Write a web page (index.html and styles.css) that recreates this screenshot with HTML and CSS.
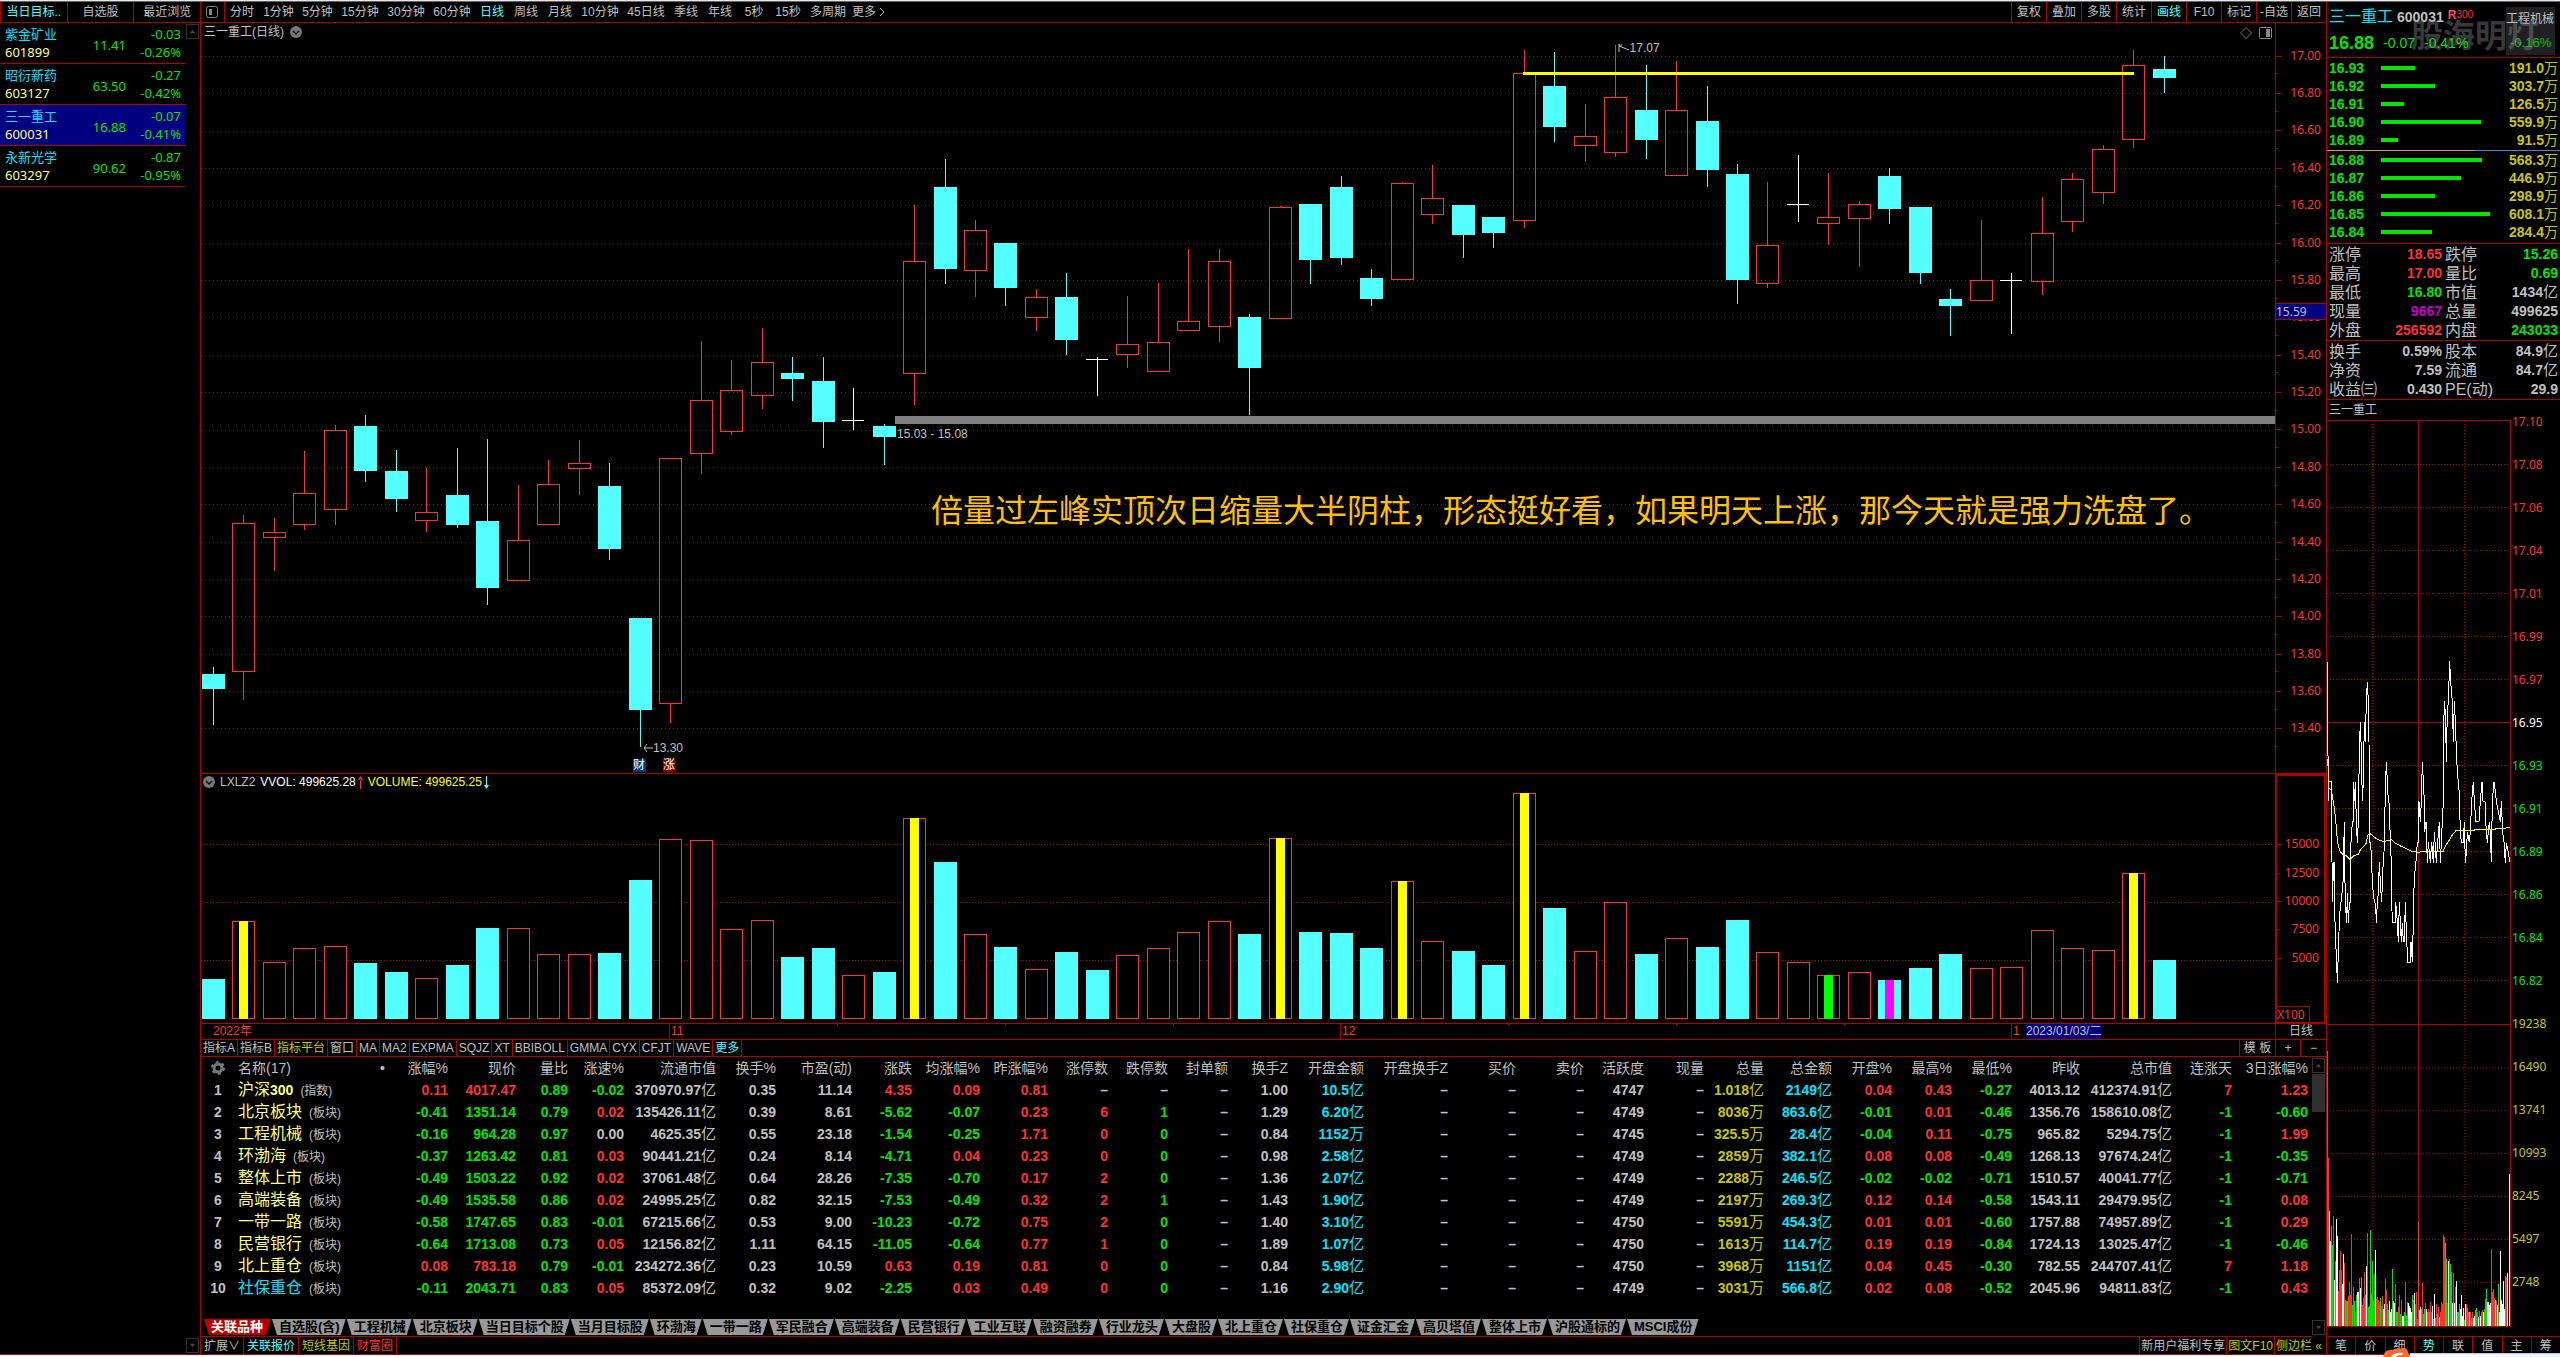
FILE: index.html
```html
<!DOCTYPE html>
<html lang="zh-CN">
<head>
<meta charset="utf-8">
<title>三一重工 600031 日线</title>
<link rel="stylesheet" href="styles.css">
</head>
<body>
<div class="window-edge"></div>
<div class="app">

  <aside class="watch">
    <nav class="watch-tabs">
      <button class="on">当日目标..</button><button>自选股</button><button>最近浏览</button>
    </nav>
    <div class="watch-body">
      <ul class="watch-list">
        <li><b>紫金矿业</b><span class="code">601899</span><span class="price">11.41</span><span class="chg">-0.03</span><span class="pct">-0.26%</span></li>
        <li><b>昭衍新药</b><span class="code">603127</span><span class="price">63.50</span><span class="chg">-0.27</span><span class="pct">-0.42%</span></li>
        <li class="sel"><b>三一重工</b><span class="code">600031</span><span class="price">16.88</span><span class="chg">-0.07</span><span class="pct">-0.41%</span></li>
        <li><b>永新光学</b><span class="code">603297</span><span class="price">90.62</span><span class="chg">-0.87</span><span class="pct">-0.95%</span></li>
      </ul>
      <div class="scroll">
        <button class="arrow" aria-label="上滚"><svg viewBox="0 0 12 12"><path d="M3 8h6L6 4z"/></svg></button>
        <button class="arrow" aria-label="下滚"><svg viewBox="0 0 12 12"><path d="M3 4h6L6 8z"/></svg></button>
      </div>
    </div>
  </aside>

  <main class="center">
    <header class="topbar">
      <button class="panel-toggle" aria-label="侧栏"><svg width="12" height="12" viewBox="0 0 12 12"><rect x=".5" y=".5" width="11" height="11" rx="2" fill="none" stroke="#888"/><path d="M3 3h3v6H3z" fill="#888"/></svg></button>
      <nav class="periods">
        <button>分时</button><button class="m">1分钟</button><button class="m">5分钟</button><button class="l">15分钟</button><button class="l">30分钟</button><button class="l">60分钟</button><button class="on">日线</button><button>周线</button><button>月线</button><button class="l">10分钟</button><button class="l">45日线</button><button>季线</button><button>年线</button><button>5秒</button><button>15秒</button><button class="l">多周期</button><button class="l more">更多<svg width="6" height="10" viewBox="0 0 6 10"><path d="M1 1l4 4-4 4" fill="none" stroke="#c0c0c0"/></svg></button>
      </nav>
      <nav class="tools">
        <button>复权</button><button>叠加</button><button>多股</button><button>统计</button><button class="on">画线</button><button>F10</button><button>标记</button><button>-自选</button><button>返回</button>
      </nav>
    </header>

    <section class="pane price-pane">
      <div class="plot">
        <svg id="candles" class="fill" viewBox="201 23 2074 750" preserveAspectRatio="none"></svg>
        <h1 class="plot-title">三一重工(日线)<svg width="12" height="12" viewBox="0 0 12 12"><circle cx="6" cy="6" r="6" fill="#777"/><path d="M3 5l3 3 3-3" fill="none" stroke="#111" stroke-width="1.5"/></svg></h1>
        <div class="plot-icons">
          <svg width="12" height="12" viewBox="0 0 12 12"><path d="M6 .5L11.500 6 6 11.500.5 6z" fill="none" stroke="#777"/></svg>
          <svg width="13" height="12" viewBox="0 0 13 12"><rect x=".5" y=".5" width="12" height="11" rx="1" fill="none" stroke="#888"/><path d="M7 2h4v8H7z" fill="#888"/></svg>
        </div>
        <span class="mark high"><svg width="12" height="10" viewBox="0 0 12 10"><path d="M1 9V1M1 2h3M1 3l10 4" fill="none" stroke="#c0c0c0"/></svg>17.07</span>
        <span class="mark low"><svg width="10" height="10" viewBox="0 0 10 10"><path d="M10 5H1M4 1L1 5l3 4" fill="none" stroke="#c0c0c0"/></svg>13.30</span>
        <span class="mark gap">15.03 - 15.08</span>
        <p class="note">倍量过左峰实顶次日缩量大半阴柱，形态挺好看，如果明天上涨，那今天就是强力洗盘了。</p>
        <span class="flag report">财</span><span class="flag rise">涨</span>
      </div>
      <div class="axis price-axis">
        <ol><li>17.00</li><li>16.80</li><li>16.60</li><li>16.40</li><li>16.20</li><li>16.00</li><li>15.80</li><li>15.60</li><li>15.40</li><li>15.20</li><li>15.00</li><li>14.80</li><li>14.60</li><li>14.40</li><li>14.20</li><li>14.00</li><li>13.80</li><li>13.60</li><li>13.40</li></ol>
        <span class="cursor-price">15.59</span>
      </div>
    </section>

    <section class="pane vol-pane">
      <div class="plot">
        <svg id="volumes" class="fill" viewBox="201 774 2074 249" preserveAspectRatio="none"></svg>
        <div class="vol-title"><svg width="12" height="12" viewBox="0 0 12 12"><circle cx="6" cy="6" r="6" fill="#777"/><path d="M3 5l3 3 3-3" fill="none" stroke="#111" stroke-width="1.500"/></svg><span>LXLZ2</span><span class="w">VVOL: 499625.28<svg width="5" height="13" viewBox="0 0 5 13"><path d="M2 3h1v10H2zM0 4h5L2.500 0z" fill="#ff3232"/></svg></span><span class="y">VOLUME: 499625.25<svg width="5" height="13" viewBox="0 0 5 13"><path d="M2 0h1v10H2zM0 9h5L2.500 13z" fill="#54ffff"/></svg></span></div>
      </div>
      <div class="axis vol-axis">
        <ol><li>15000</li><li>12500</li><li>10000</li><li>7500</li><li>5000</li></ol>
        <span class="unit">X100</span>
      </div>
    </section>

    <div class="dates">
      <div class="date-track">
        <span>2022年</span><span class="month">11</span><span class="month">12</span><span class="month">1</span>
        <span class="cursor-date">2023/01/03/二</span>
      </div>
      <span class="date-unit">日线</span>
    </div>

    <nav class="indicators">
      <button>指标A</button><button>指标B</button><button class="y">指标平台</button><button>窗口</button><button>MA</button><button>MA2</button><button>EXPMA</button><button>SQJZ</button><button>XT</button><button>BBIBOLL</button><button>GMMA</button><button>CYX</button><button>CFJT</button><button>WAVE</button><button class="on">更多</button>
      <div class="templates"><button>模 板</button><button>+</button><button>−</button></div>
    </nav>

    <section class="quotes">
      <div class="quotes-view">
        <table id="quotes"></table>
      </div>
      <div class="scroll">
        <button class="arrow" aria-label="上滚"><svg viewBox="0 0 12 12"><path d="M3 8h6L6 4z"/></svg></button>
        <div class="thumb"></div>
        <button class="arrow" aria-label="下滚"><svg viewBox="0 0 12 12"><path d="M3 4h6L6 8z"/></svg></button>
      </div>
    </section>

    <nav class="boards">
      <button class="on">关联品种</button><button>自选股(含)</button><button>工程机械</button><button>北京板块</button><button>当日目标个股</button><button>当月目标股</button><button>环渤海</button><button>一带一路</button><button>军民融合</button><button>高端装备</button><button>民营银行</button><button>工业互联</button><button>融资融券</button><button>行业龙头</button><button>大盘股</button><button>北上重仓</button><button>社保重仓</button><button>证金汇金</button><button>高贝塔值</button><button>整体上市</button><button>沪股通标的</button><button>MSCI成份</button>
    </nav>

    <footer class="statusbar">
      <button>扩展∨</button><button class="on">关联报价</button><button class="y">短线基因</button><button class="r">财富圈</button>
      <div class="status-right"><button>新用户福利专享</button><button class="y">图文F10</button><button class="y">侧边栏 «</button></div>
    </footer>
  </main>

  <aside class="detail">
    <header class="stock">
      <div class="stock-id"><h2>三一重工</h2><b>600031</b><i>R</i><small>300</small></div>
      <div class="stock-price"><strong>16.88</strong><span>-0.07</span><span>-0.41%</span></div>
      <div class="sector"><span>工程机械</span><em>-0.16%</em></div>
      <div class="watermark">股海明灯</div>
    </header>
    <ul class="book asks">
      <li><b>16.93</b><i style="width:34px"></i><span>191.0<u>万</u></span></li>
      <li><b>16.92</b><i style="width:54px"></i><span>303.7<u>万</u></span></li>
      <li><b>16.91</b><i style="width:23px"></i><span>126.5<u>万</u></span></li>
      <li><b>16.90</b><i style="width:100px"></i><span>559.9<u>万</u></span></li>
      <li><b>16.89</b><i style="width:17px"></i><span>91.5<u>万</u></span></li>
    </ul>
    <div class="ratio"><i></i></div>
    <ul class="book bids">
      <li><b>16.88</b><i style="width:101px"></i><span>568.3<u>万</u></span></li>
      <li><b>16.87</b><i style="width:80px"></i><span>446.9<u>万</u></span></li>
      <li><b>16.86</b><i style="width:54px"></i><span>298.9<u>万</u></span></li>
      <li><b>16.85</b><i style="width:109px"></i><span>608.1<u>万</u></span></li>
      <li><b>16.84</b><i style="width:51px"></i><span>284.4<u>万</u></span></li>
    </ul>
    <dl class="stats">
      <dt>涨停</dt><dd class="r">18.65</dd><dt>跌停</dt><dd class="g">15.26</dd>
      <dt>最高</dt><dd class="r">17.00</dd><dt>量比</dt><dd class="g">0.69</dd>
      <dt>最低</dt><dd class="g">16.80</dd><dt>市值</dt><dd>1434<u>亿</u></dd>
      <dt>现量</dt><dd class="m">9667</dd><dt>总量</dt><dd>499625</dd>
      <dt>外盘</dt><dd class="r">256592</dd><dt>内盘</dt><dd class="g">243033</dd>
    </dl>
    <dl class="stats">
      <dt>换手</dt><dd>0.59%</dd><dt>股本</dt><dd>84.9<u>亿</u></dd>
      <dt>净资</dt><dd>7.59</dd><dt>流通</dt><dd>84.7<u>亿</u></dd>
      <dt>收益㈢</dt><dd>0.430</dd><dt>PE(动)</dt><dd>29.9</dd>
    </dl>
    <section class="intraday">
      <div class="intraday-plots">
        <h3>三一重工</h3>
        <svg id="minute" class="minute" viewBox="321 52 549 1480" preserveAspectRatio="none">
          <polyline class="line-price" points="322,642 323,815 326,985 327,937 334,937 336,1135 338,1233 340,1135 343,1135 344,1255 347,1330 350,1380 352,1430 354,1380 357,1305 360,1255 363,1233 366,1210 369,1185 371,1115 373,1035 375,1185 378,1258 380,1283 382,1210 385,1283 388,1235 391,1233 393,1085 397,1035 400,1035 401,937 404,985 406,937 409,1035 412,1087 415,1035 418,862 421,790 424,862 427,985 430,937 433,790 436,840 439,740 442,692 445,740 447,840 449,1085 452,1087 455,1135 457,1185 460,1210 463,1233 467,1235 469,1283 472,1233 475,1210 478,1135 481,1185 485,1233 488,1160 492,1110 494,1035 497,937 499,888 502,937 505,985 508,990 511,1085 514,1135 516,1255 518,1283 526,1283 527,1233 530,1255 535,1330 538,1233 541,1283 544,1330 547,1283 550,1330 553,1330 556,1233 559,1305 563,1380 571,1380 573,1330 577,1380 580,1283 583,1160 586,1155 590,1110 592,1087 595,1085 597,985 601,1035 604,985 607,888 610,937 613,985 614,1060 618,1035 622,1135 625,1085 631,1135 635,1085 640,1135 643,1060 649,1135 653,1085 658,1035 661,1135 664,1085 667,1035 670,985 671,790 674,740 677,790 679,888 682,765 685,740 689,642 692,692 697,740 700,840 703,740 706,790 709,860 712,912 718,965 721,1060 724,1087 730,1085 733,1035 736,1135 739,1110 742,1060 748,1085 751,1060 755,985 760,937 763,985 768,1035 777,1035 781,985 786,937 789,985 795,987 797,1035 802,1087 805,1060 808,1035 811,1060 814,1135 817,985 822,937 826,960 829,985 835,1010 841,1035 844,985 848,1060 852,1085 856,1135 859,1087 865,1110 869,1133"/>
          <polyline class="line-avg" points="322,882 325,905 327,952 334,958 341,990 347,1030 352,1080 356,1098 362,1110 372,1117 380,1119 391,1128 400,1119 415,1115 422,1102 433,1094 439,1087 443,1068 450,1064 459,1070 470,1077 490,1084 515,1079 527,1088 545,1096 560,1101 575,1108 595,1110 610,1108 669,1108 676,1095 690,1077 699,1065 709,1056 760,1056 770,1054 818,1054 840,1051 869,1050"/>
        </svg>
        <svg id="minute-vol" class="minute-vol" viewBox="51 16 549 902" preserveAspectRatio="none"></svg>
      </div>
      <ol class="minute-axis">
        <li>17.10</li><li>17.08</li><li>17.06</li><li>17.04</li><li>17.01</li><li>16.99</li><li>16.97</li><li class="w">16.95</li><li class="g">16.93</li><li class="g">16.91</li><li class="g">16.89</li><li class="g">16.86</li><li class="g">16.84</li><li class="g">16.82</li><li class="y">19238</li><li class="y">16490</li><li class="y">13741</li><li class="y">10993</li><li class="y">8245</li><li class="y">5497</li><li class="y">2748</li>
      </ol>
    </section>
    <nav class="detail-tabs">
      <button>笔</button><button>价</button><button>细</button><button class="on">势</button><button>联</button><button>值</button><button>主</button><button>筹</button>
    </nav>
  </aside>
</div>
<div class="desktop-edge"></div>
<div class="ime">
  <svg width="28" height="9" viewBox="0 0 28 9"><path d="M1 9L3 4Q5 2 9 2L22 0Q25 0 26 4L28 9z" fill="#ff6a30"/><path d="M9 9Q13 4 21 5L20 7Q15 7 13 9z" fill="#fff"/></svg>
  <i></i>
</div>
<script src="app.js"></script>
</body>
</html>
```
FILE: styles.css
```css
:root {
  --line: #b00000;
  --red: #ff3232;
  --green: #00e600;
  --cyan: #54ffff;
  --aqua: #00e6ff;
  --yellow: #c8c800;
  --grey: #c0c0c0;
  --sans: "Liberation Sans", "Noto Sans CJK SC", sans-serif;
  --ui: "Noto Sans", "Noto Sans CJK SC", sans-serif;
}
* { box-sizing: border-box; margin: 0; padding: 0; }
body {
  display: flex;
  flex-direction: column;
  min-height: 100vh;
  background: #000;
  color: var(--grey);
  font: 12px/16px var(--sans);
  position: relative;
}
button { background: none; border: 0; color: inherit; font: inherit; white-space: nowrap; cursor: pointer; }
ul, ol { list-style: none; }
svg { display: block; flex: none; }
u { text-decoration: none; font-weight: 400; font-size: 15px; line-height: 0; }
.on { color: var(--cyan); }
.r { color: var(--red); }
.g { color: var(--green); }
.y { color: var(--yellow); }
.w { color: #fff; }

.window-edge { height: 2px; background: #e8e8e8; border-bottom: 1px solid #666; }
.desktop-edge { height: 2px; background: #fff; }
.app { flex: 1; display: flex; align-items: stretch; border-bottom: 1px solid var(--line); }

/* watch list */
.watch { width: 201px; flex: none; display: flex; flex-direction: column; border-right: 1px solid var(--line); }
.watch-tabs { display: flex; height: 21px; border-bottom: 1px solid var(--line); }
.watch-tabs button { flex: 1; border-left: 1px solid var(--line); overflow: hidden; }
.watch-body { flex: 1; display: flex; }
.watch-list { flex: 1; font: 13px/18px var(--ui); }
.watch-list li {
  display: grid;
  grid-template: 18px 18px / 66px 55px 1fr;
  height: 41px;
  padding: 2px 5px 0;
  border-bottom: 1px solid var(--line);
  color: var(--green);
}
.watch-list .sel { background: #000080; }
.watch-list b { font-weight: 400; color: var(--aqua); grid-area: 1 / 1; }
.watch-list .code { color: #ffff80; grid-area: 2 / 1; }
.watch-list .price { grid-area: 1 / 2 / 3 / 3; align-self: center; text-align: right; padding-top: 3px; }
.watch-list .chg { grid-area: 1 / 3; text-align: right; }
.watch-list .pct { grid-area: 2 / 3; text-align: right; }

.scroll { width: 14px; flex: none; display: flex; flex-direction: column; padding: 1px 0; }
.scroll .arrow { width: 13px; height: 15px; border: 1px solid #333; }
.scroll .arrow svg { width: 11px; height: 13px; fill: #444; }
.scroll .arrow:last-child { margin-top: auto; }
.thumb { width: 13px; height: 38px; margin-top: 1px; background: #303030; }

/* centre column */
.center { flex: 1; min-width: 0; display: flex; flex-direction: column; }
.topbar { display: flex; height: 21px; border-bottom: 1px solid var(--line); }
.panel-toggle { width: 24px; padding: 0 5px; border-right: 1px solid var(--line); }
.periods { display: flex; }
.periods button { width: 34px; text-align: center; }
.periods .m { width: 39px; }
.periods .l { width: 46px; }
.periods .more { display: flex; align-items: center; gap: 3px; padding-left: 1px; }
.tools { display: flex; margin-left: auto; }
.tools button { width: 35px; border-left: 1px solid var(--line); }

.pane { display: flex; border-bottom: 1px solid var(--line); }
.price-pane { flex: 1; min-height: 300px; }
.vol-pane { height: 250px; }
.plot { position: relative; flex: 1; min-width: 0; overflow: hidden; }
.fill { position: absolute; inset: 0; width: 100%; height: 100%; }
.fill *, .minute *, .minute-vol * { vector-effect: non-scaling-stroke; shape-rendering: crispEdges; }
.grid { stroke: var(--line); fill: none; stroke-dasharray: 1 3; }
.grid.dense { stroke-dasharray: 1 2; }
.solid { stroke: var(--line); fill: none; }
.up { fill: #000; stroke: var(--red); }
.hollow { fill: none; stroke: var(--red); }
.down { fill: var(--cyan); stroke: none; }
.wick-up { stroke: var(--red); }
.wick-down { stroke: var(--cyan); }
.wick-flat { stroke: #fff; }
.gap-band { fill: #808080; }
.peak-line { fill: #ff0; }

.plot-title { position: relative; display: flex; align-items: center; gap: 6px; padding: 1px 3px; font-size: 12px; font-weight: 400; }
.plot-icons { position: absolute; top: 4px; right: 3px; display: flex; gap: 7px; }
.mark { position: absolute; display: flex; align-items: center; }
.high { left: 68.3%; top: 17px; }
.low { left: 442px; top: 717px; }
.gap { left: 696px; top: 403px; }
.note { position: absolute; left: 730px; top: 468px; font-size: 32px; line-height: 40px; color: #ffc000; white-space: nowrap; }
.flag { position: absolute; top: 736px; width: 13px; height: 13px; font-size: 12px; line-height: 13px; color: #fff; }
.report { left: 432px; background: #003c78; }
.rise { left: 462px; background: #800000; }

.axis { width: 51px; flex: none; border-left: 1px solid var(--line); position: relative; font: 12px/16px var(--ui); color: var(--red); }
.axis ol { display: flex; flex-direction: column; height: 100%; }
.axis li { flex: 1; display: flex; align-items: center; justify-content: flex-end; padding-right: 5px; position: relative; }
.axis li::before { content: ""; position: absolute; left: 0; top: 50%; width: 5px; border-top: 1px solid var(--line); }
.axis li::after { content: ""; position: absolute; left: 0; bottom: 0; width: 2px; border-top: 1px solid var(--line); }
.price-axis ol { padding: 14px 0 26px; }
.vol-axis ol { padding: 54px 0 50px; }
.vol-axis li:nth-child(even)::before { width: 2px; }
.vol-axis li::after { display: none; }
.vol-axis { border: 2px solid var(--line); border-bottom: 1px solid var(--line); }
.cursor-price { position: absolute; left: 0; right: 0; top: 280px; height: 17px; line-height: 15px; background: #000080; border: solid var(--line); border-width: 1px 0; color: var(--grey); }
.unit { position: absolute; left: 0; bottom: 0; width: 33px; line-height: 15px; border: solid var(--line); border-width: 1px 1px 0 0; }

.vol-title { position: relative; display: flex; align-items: center; gap: 5px; padding: 0 2px; }
.vol-title span { display: flex; align-items: center; gap: 2px; }
.vol-title .y { color: #ff0; }

.dates { display: flex; height: 16px; border-bottom: 1px solid var(--line); color: var(--red); line-height: 15px; }
.date-track { flex: 1; display: grid; grid-template-columns: 456px 671px 671px 15px auto; padding-left: 12px; }
.month { border-left: 1px solid var(--line); padding-left: 1px; background: repeating-linear-gradient(90deg, transparent 0 167px, var(--line) 167px 168px) 0 0 / 505px 2px no-repeat; }
.cursor-date { justify-self: start; background: #000080; color: var(--grey); white-space: nowrap; }
.date-unit { width: 51px; border-left: 1px solid var(--line); text-align: center; color: var(--grey); }

.indicators, .statusbar { display: flex; }
.indicators { height: 17px; border-bottom: 1px solid var(--line); }
.indicators button { padding: 0 2px; border-right: 1px solid var(--line); }
.templates { display: flex; margin-left: auto; border-left: 1px solid var(--line); }
.templates button { width: 25px; }
.templates button:first-child { width: 36px; }
.templates button:last-child { border: 0; }

/* quotes */
.quotes { display: flex; height: 279px; margin-bottom: -17px; }
.quotes-view { flex: 1; min-width: 0; padding: 0 4px 0 1px; }
.quotes table { width: 100%; table-layout: fixed; border-collapse: collapse; }
.quotes th, .quotes td { height: 22px; line-height: 20px; text-align: right; white-space: nowrap; vertical-align: middle; }
.quotes th { font-size: 14px; font-weight: 400; }
.quotes td { font-size: 14px; font-weight: 700; }
.quotes .no { text-align: center; }
.quotes .name { text-align: left; padding-left: 4px; }
.quotes td.name { color: #ffff80; font-size: 16px; line-height: 18px; font-weight: 400; }
.quotes td.name b { font-size: 14px; line-height: 0; }
.quotes td.name small { color: var(--grey); font-size: 12px; line-height: 0; margin-left: 7px; }
.quotes tr:last-child td.name { color: var(--aqua); }
.quotes .c { color: var(--aqua); }
.quotes th.name span { float: right; padding-right: 1px; }
.gear { margin: 0 auto; }

.boards { display: flex; height: 18px; padding: 0 3px 1px; border-bottom: 1px solid var(--line); font-size: 13px; font-weight: 700; margin-right: 14px; position: relative; }
.boards button { padding: 0 7px; height: 16px; line-height: 16px; background: #989898; color: #000; clip-path: polygon(0 0, calc(100% - 1px) 0, calc(100% - 6px) 100%, 5px 100%); }
.boards .on { background: #c00000; color: #fff; padding-right: 9px; }

.statusbar { height: 17px; }
.statusbar button { padding: 0 3px; border-right: 1px solid var(--line); }
.status-right { display: flex; margin-left: auto; border-left: 1px solid var(--line); }
.status-right button { padding: 0 1px; }
.status-right button:last-child { width: 51px; border: 0; text-align: left; }

/* stock detail */
.detail { width: 234px; flex: none; display: flex; flex-direction: column; border-left: 1px solid var(--line); }
.stock { position: relative; height: 56px; padding: 4px 2px; border-bottom: 1px solid var(--line); }
.stock-id { display: flex; line-height: 22px; }
.stock-id h2 { font-size: 16px; font-weight: 400; color: var(--aqua); margin-right: 4px; }
.stock-id b { font-size: 14px; margin-right: 4px; }
.stock-id i { font: 700 12px/18px var(--sans); color: #ff5050; }
.stock-id small { font-size: 10px; line-height: 18px; color: var(--red); }
.stock-price { display: flex; gap: 9px; font-size: 14px; line-height: 30px; color: var(--green); }
.stock-price strong { font-size: 18px; }
.sector { position: absolute; top: 5px; right: 5px; width: 49px; height: 48px; background: #202024; line-height: 24px; }
.sector em { display: block; font-style: normal; font-size: 13px; padding-left: 4px; color: var(--green); opacity: .8; }
.watermark { position: absolute; left: 84px; top: 14px; font-size: 32px; line-height: 40px; font-weight: 700; color: rgba(150, 150, 150, .38); }
.book { padding: 1px 2px 0; }
.book li { display: grid; grid-template-columns: 52px 1fr auto; align-items: center; height: 18px; font-size: 14px; font-weight: 700; color: var(--green); }
.book i { height: 4px; background: var(--green); }
.book span { color: var(--yellow); }
.book u { font-size: 14px; }
.asks { height: 92px; }
.ratio { height: 1px; background: #3c8cdc; }
.ratio i { display: block; width: 63%; height: 1px; background: #e09a3c; }
.bids { height: 93px; padding-top: 0; border-bottom: 1px solid var(--line); }
.stats { display: grid; grid-template-columns: 34px 1fr 34px 1fr; grid-auto-rows: 19px; padding: 1px 2px 0; border-bottom: 1px solid var(--line); font-size: 14px; line-height: 19px; column-gap: 3px; }
.stats dt { font-size: 16px; white-space: nowrap; }
.stats dd { text-align: right; font-weight: 700; }
.stats .m { color: #c800c8; }

.intraday { flex: 1; display: flex; }
.intraday-plots { width: 184px; flex: none; display: flex; flex-direction: column; padding-bottom: 9px; }
.intraday h3 { font-size: 12px; font-weight: 400; line-height: 20px; height: 20px; padding-left: 2px; }
.minute, .minute-vol { width: 100%; min-height: 0; border: solid var(--line); border-width: 1px 1px 0 0; }
.minute { flex: 604 1 0; }
.minute-vol { flex: 301 1 0; border-bottom-width: 1px; }
.line-price { fill: none; stroke: #fff; }
.line-avg { fill: none; stroke: #ff0; }
.minute-axis { flex: 1; display: flex; flex-direction: column; padding-bottom: 32px; font: 12px/16px var(--ui); color: var(--red); }
.minute-axis li { flex: 1; display: flex; align-items: center; padding-left: 1px; }
.detail-tabs { display: flex; height: 18px; border-top: 1px solid var(--line); }
.detail-tabs button { flex: 1; border-left: 1px solid var(--line); }
.detail-tabs button:first-child { border: 0; }

.ime { position: absolute; right: 0; bottom: 0; width: 178px; height: 9px; display: flex; align-items: flex-end; }
.ime i { flex: 1; height: 4px; background: linear-gradient(90deg, #fff, #e8f0fc); border-top: 1px solid #b8c8e8; }
```
FILE: app.js
```js
const NS = 'http://www.w3.org/2000/svg';
function add(svg, tag, attrs) {
  const el = document.createElementNS(NS, tag);
  for (const k in attrs) el.setAttribute(k, attrs[k]);
  svg.appendChild(el);
  return el;
}
const rect = (s, cls, x, y, w, h) => add(s, 'rect', { class: cls, x, y, width: w, height: h });
const line = (s, cls, x1, y1, x2, y2) => add(s, 'line', { class: cls, x1, y1, x2, y2 });

// Daily bars: kind (r up, c down, w flat), high, body top, body bottom, low
const bars = `c667,674,689,725 r515,523,671,700 r518,532,537,571 r451,493,524,530 r425,430,509,525
c415,426,471,482 c450,471,499,512 r468,512,520,532 c448,495,525,528 c439,521,588,605 r485,540,580,580
r460,484,524,524 r440,463,468,495 c463,486,549,560 c618,618,710,747 r458,458,703,723 r341,400,453,474
r360,390,431,435 r328,362,395,409 c357,373,379,401 c357,381,422,448 w388,420,420,430 c424,426,437,465
r205,261,373,405 c159,187,269,284 r220,230,270,297 c243,243,288,306 r289,297,317,331 c273,297,340,355
w357,359,359,396 r296,344,354,368 r283,342,371,371 r249,321,330,331 r249,261,326,342 c314,317,368,415
r206,207,318,318 c204,204,260,284 c176,187,258,265 c269,278,299,306 r182,183,279,280 r165,198,214,224
c205,205,235,258 c217,217,233,248 r50,73,220,228 c52,86,127,142 r104,136,145,161 r45,97,152,157
c65,110,140,159 r61,110,175,175 c86,121,170,187 c164,174,280,304 r182,245,283,288 w155,204,204,222
r173,217,223,245 r201,204,218,267 c168,176,209,224 c207,207,273,284 c289,299,306,336 r220,280,300,300
w273,280,280,334 r197,233,281,295 r173,179,221,232 r145,149,192,204 r50,65,139,148 c56,69,78,93`.split(/\s+/);

const PITCH = 30.48, FIRST = 213;
const candles = document.getElementById('candles');
for (let i = 0; i < 19; i++) {
  const y = Math.round(56 + i * 37.35) + 0.5;
  line(candles, 'grid', 201, y, 2270, y);
}
bars.forEach((b, i) => {
  const kind = b[0];
  const [hi, top, bot, lo] = b.slice(1).split(',').map(Number);
  const x = Math.round(FIRST + i * PITCH);
  if (kind === 'c') {
    line(candles, 'wick-down', x + 0.5, hi, x + 0.5, lo);
    rect(candles, 'down', x - 11, top, 23, bot - top);
  } else if (kind === 'r') {
    if (hi < top) line(candles, 'wick-up', x + 0.5, hi, x + 0.5, top);
    if (lo > bot) line(candles, 'wick-up', x + 0.5, bot, x + 0.5, lo);
    rect(candles, 'hollow', x - 10.5, top + 0.5, 22, bot - top);
  } else {
    line(candles, 'wick-flat', x + 0.5, hi, x + 0.5, lo);
    line(candles, 'wick-flat', x - 11, top + 0.5, x + 11, top + 0.5);
  }
});
rect(candles, 'gap-band', 895, 416, 1380, 8);
rect(candles, 'peak-line', 1523, 72, 611, 3);

// Volume bars: kind, height, optional signal colour (y, g, m)
const vols = `c40 r98y r57 r71 r73 c56 c47 r41 c54 c91 r91 r65 r65 c66 c139 r180 r179 r90 r99 c62 c71 r44 c47
r201y c157 r85 c72 r50 c67 c49 r64 r71 r87 r98 c85 r181y c87 c86 c71 r138y r78 c68 c54 r226y c111 r68 r117
c65 r81 c72 c99 r67 r57 r44g r47 c39m c51 c65 r51 r52 r89 r71 r69 r146y c59`.split(/\s+/);
const signal = { y: '#ff0', g: '#0f0', m: '#f0f' };
const volumes = document.getElementById('volumes');
[844.5, 902.5, 960.5].forEach(y => line(volumes, 'grid dense', 201, y, 2272, y));
vols.forEach((v, i) => {
  const h = parseInt(v.slice(1), 10), x = Math.round(FIRST + i * PITCH), mark = v.slice(-1);
  if (v[0] === 'c') rect(volumes, 'down', x - 11, 1019 - h, 23, h);
  else rect(volumes, 'up', x - 10.5, 1019.5 - h, 22, h - 1);
  if (signal[mark]) rect(volumes, '', x - 4, 1019 - h, 9, h).setAttribute('fill', signal[mark]);
});

// Minute chart grid
function minuteGrid(id, x0, y0, w, rows, step, solidRow, h) {
  const s = document.getElementById(id), first = s.firstChild;
  const put = el => s.insertBefore(el, first);
  for (let i = 1; i <= rows; i++) {
    const y = y0 + i * step;
    put(line(s, i === solidRow ? 'solid' : 'grid dense', x0, y, x0 + w, y));
  }
  put(line(s, 'grid dense', x0 + w / 4, y0, x0 + w / 4, y0 + h));
  put(line(s, 'solid', x0 + w / 2, y0, x0 + w / 2, y0 + h));
  put(line(s, 'grid dense', x0 + w * 3 / 4, y0, x0 + w * 3 / 4, y0 + h));
}
minuteGrid('minute', 321, 52, 549, 13, 105.6, 7, 1480);
minuteGrid('minute-vol', 51, 16, 549, 6, 128.6, 0, 902);

// Minute volume: colour and top of each one-minute bar
const ticks = `r93 r414 w573 w663 g618 g675 r588 w780 g723 w597 w648 r813 r750 r693 r750 w792 w702 r729 g840 g843 g843
r828 r786 r825 r642 g855 r801 g843 r876 g825 w816 w816 r774 w804 g771 r855 r834 r756 g825 w738 r639 g861 g858 g630
g822 g723 g843 g762 w690 r837 r831 r840 r846 g834 r858 r828 w867 w852 r777 r810 g852 g870 w843 w876 w868 g747 w843
w849 r792 g876 g876 r861 r825 g882 r840 w888 w888 g876 r786 g888 g846 w849 w858 w864 w876 g825 r840 w819 r852 r816
r897 r606 w870 w861 g867 r789 g882 g867 r849 w867 g876 r867 g876 r846 r876 w858 g897 w822 g894 r852 g882 r861 w891
r876 r846 r852 r645 r651 g669 g717 r849 w723 r717 g732 g756 w849 r759 w849 g801 w783 g876 g876 g852 w867 w825 w888
w864 g900 w852 r852 g864 r876 w876 r876 g894 r876 w894 w888 g870 g864 r876 w891 r873 w888 r876 r870 w876 g867 g837
g807 w846 w846 w855 w849 r687 r816 r807 r834 w840 r843 w855 g792 w876 w693 w840 w852 w783 w867 g768 r771 w759 w918
w462`.split(/\s+/);
const fills = { r: '#ff3232', g: '#00e600', w: '#fff' };
const mv = document.getElementById('minute-vol');
ticks.forEach((t, i) => {
  const y = +t.slice(1);
  rect(mv, '', 51 + i * 3, y, 3, 918 - y).setAttribute('fill', fills[t[0]]);
});

// Related boards table
const cols = [['', 32], ['名称(17)', 152], ['涨幅%', 62], ['现价', 68], ['量比', 52], ['涨速%', 56], ['流通市值', 92],
  ['换手%', 60], ['市盈(动)', 76], ['涨跌', 60], ['均涨幅%', 68], ['昨涨幅%', 68], ['涨停数', 60], ['跌停数', 60],
  ['封单额', 60], ['换手Z', 60], ['开盘金额', 76], ['开盘换手Z', 84], ['买价', 68], ['卖价', 68], ['活跃度', 60],
  ['现量', 60], ['总量', 60], ['总金额', 68], ['开盘%', 60], ['最高%', 60], ['最低%', 60], ['昨收', 68],
  ['总市值', 92], ['连涨天', 60], ['3日涨幅%', 76]];
// s: by sign, p: by the day's change, g/r/y/c: fixed colour, n: neutral
const tint = 'nnspgsnnnsssrgnncnnnnnycsssnnss';
const rows = `沪深300 0.11 4017.47 0.89 -0.02 370970.97亿 0.35 11.14 4.35 0.09 0.81 – – – 1.00 10.5亿 – – – 4747 – 1.018亿 2149亿 0.04 0.43 -0.27 4013.12 412374.91亿 7 1.23
北京板块 -0.41 1351.14 0.79 0.02 135426.11亿 0.39 8.61 -5.62 -0.07 0.23 6 1 – 1.29 6.20亿 – – – 4749 – 8036万 863.6亿 -0.01 0.01 -0.46 1356.76 158610.08亿 -1 -0.60
工程机械 -0.16 964.28 0.97 0.00 4625.35亿 0.55 23.18 -1.54 -0.25 1.71 0 0 – 0.84 1152万 – – – 4745 – 325.5万 28.4亿 -0.04 0.11 -0.75 965.82 5294.75亿 -1 1.99
环渤海 -0.37 1263.42 0.81 0.03 90441.21亿 0.24 8.14 -4.71 0.04 0.23 0 0 – 0.98 2.58亿 – – – 4749 – 2859万 382.1亿 0.08 0.08 -0.49 1268.13 97674.24亿 -1 -0.35
整体上市 -0.49 1503.22 0.92 0.02 37061.48亿 0.64 28.26 -7.35 -0.70 0.17 2 0 – 1.36 2.07亿 – – – 4749 – 2288万 246.5亿 -0.02 -0.02 -0.71 1510.57 40041.77亿 -1 -0.71
高端装备 -0.49 1535.58 0.86 0.02 24995.25亿 0.82 32.15 -7.53 -0.49 0.32 2 1 – 1.43 1.90亿 – – – 4749 – 2197万 269.3亿 0.12 0.14 -0.58 1543.11 29479.95亿 -1 0.08
一带一路 -0.58 1747.65 0.83 -0.01 67215.66亿 0.53 9.00 -10.23 -0.72 0.75 2 0 – 1.40 3.10亿 – – – 4750 – 5591万 454.3亿 0.01 0.01 -0.60 1757.88 74957.89亿 -1 0.29
民营银行 -0.64 1713.08 0.73 0.05 12156.82亿 1.11 64.15 -11.05 -0.64 0.77 1 0 – 1.89 1.07亿 – – – 4750 – 1613万 114.7亿 0.19 0.19 -0.84 1724.13 13025.47亿 -1 -0.46
北上重仓 0.08 783.18 0.79 -0.01 234272.36亿 0.23 10.59 0.63 0.19 0.81 0 0 – 0.84 5.98亿 – – – 4750 – 3968万 1151亿 0.04 0.45 -0.30 782.55 244707.41亿 7 1.18
社保重仓 -0.11 2043.71 0.83 0.05 85372.09亿 0.32 9.02 -2.25 0.03 0.49 0 0 – 1.16 2.90亿 – – – 4749 – 3031万 566.8亿 0.02 0.08 -0.52 2045.96 94811.83亿 -1 0.43`.split('\n');

const gear = '<svg class="gear" width="14" height="14" viewBox="0 0 14 14"><circle cx="7" cy="7" r="4" fill="none" stroke="#777" stroke-width="3"/><circle cx="7" cy="7" r="6" fill="none" stroke="#777" stroke-width="2" stroke-dasharray="3 3.300"/></svg>';
const signClass = v => (parseFloat(v) > 0 ? 'r' : parseFloat(v) < 0 ? 'g' : '');
let html = '<colgroup>' + cols.map(c => `<col style="width:${c[1]}px">`).join('') + '</colgroup><thead><tr>';
cols.forEach(([t], i) => {
  html += i === 0 ? `<th class="no">${gear}</th>` : i === 1 ? `<th class="name">${t}<span>•</span></th>` : `<th>${t}</th>`;
});
html += '</tr></thead><tbody>';
rows.forEach((row, r) => {
  const cells = row.split(' ');
  html += `<tr><td class="no">${r + 1}</td>`;
  cells.forEach((v, k) => {
    if (k === 0) {
      const kind = r === 0 ? '指数' : '板块';
      html += `<td class="name">${v.replace(/(\d+)/, '<b>$1</b>')}<small>(${kind})</small></td>`;
      return;
    }
    const t = tint[k + 1];
    const cls = t === 's' ? signClass(v) : t === 'p' ? signClass(cells[1]) : t === 'n' || v === '–' ? '' : t;
    html += `<td class="${cls}">${v.replace(/([亿万])/, '<u>$1</u>')}</td>`;
  });
  html += '</tr>';
});
document.getElementById('quotes').innerHTML = html + '</tbody>';
```
